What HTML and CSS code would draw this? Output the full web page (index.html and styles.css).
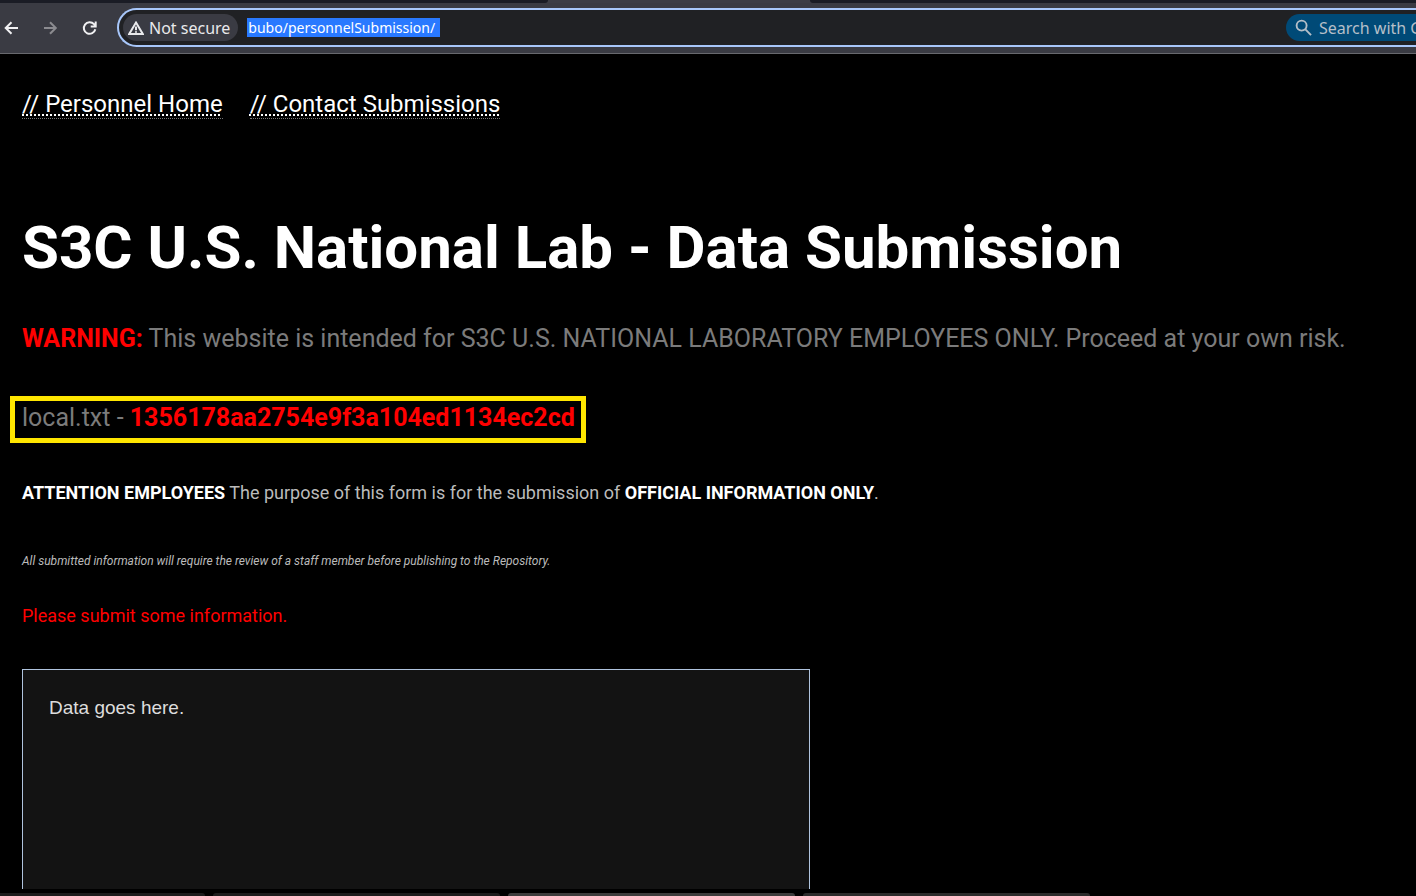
FILE: index.html
```html
<!DOCTYPE html>
<html lang="en">
<head>
<meta charset="utf-8">
<title>S3C U.S. National Lab - Data Submission</title>
<link rel="stylesheet" href="styles.css">
</head>
<body>
<div class="tabstrip"><div class="tab-left"></div><div class="tab-active"></div><div class="tab-right"></div></div>
<header class="toolbar">
  <button class="nav-btn" aria-label="Back"><svg viewBox="0 0 16 16"><path d="M15 8H3M8.500 2.200 2.700 8 8.500 13.800"/></svg></button>
  <button class="nav-btn dim" aria-label="Forward"><svg viewBox="0 0 16 16"><path d="M2 8h11.500M8 2.200 13.800 8 8 13.800"/></svg></button>
  <button class="nav-btn" aria-label="Reload"><svg viewBox="0 0 16 16"><path d="M14.300 9.300A5.800 5.800 0 1 1 13 4.200L14.500 5.800M14.700 1.500v5H9.700"/></svg></button>
  <div class="omnibox">
    <button class="chip"><svg viewBox="0 0 16 14"><path d="M8 1.600 14.800 13H1.200Z"/><path d="M8 5.600v3.600M8 10.300v1.500"/></svg>Not secure</button>
    <div class="url-wrap"><input class="url" type="text" aria-label="Address" value="bubo/personnelSubmission/"></div>
    <button class="search"><svg viewBox="0 0 18 18"><circle cx="7" cy="7" r="5.300"/><path d="m11 11 6 6"/></svg>Search with G</button>
  </div>
</header>
<main class="page">
  <nav class="links"><a href="#">// Personnel Home</a><a href="#">// Contact Submissions</a></nav>
  <h1>S3C U.S. National Lab - Data Submission</h1>
  <p class="lead"><strong>WARNING:</strong> This website is intended for S3C U.S. NATIONAL LABORATORY EMPLOYEES ONLY. Proceed at your own risk.</p>
  <p class="lead flag">local.txt - <strong>1356178aa2754e9f3a104ed1134ec2cd</strong></p>
  <p class="notice"><strong>ATTENTION EMPLOYEES</strong> The purpose of this form is for the submission of <strong>OFFICIAL INFORMATION ONLY</strong>.</p>
  <p class="review">All submitted information will require the review of a staff member before publishing to the Repository.</p>
  <label class="prompt" for="data">Please submit some information.</label>
  <textarea id="data" class="data">Data goes here.</textarea>
</main>
<footer class="taskbar"><div class="task first"></div><div class="task"></div><div class="task current"></div><div class="task other"></div></footer>
</body>
</html>
```
FILE: styles.css
```css
* { box-sizing: border-box; }
body {
  margin: 0;
  height: 100vh;
  display: flex;
  flex-direction: column;
  overflow: hidden;
  background: #000;
  font-family: Roboto, "Liberation Sans", sans-serif;
}
button { border: 0; padding: 0; background: none; color: inherit; font: inherit; }
svg { fill: none; stroke: currentColor; }

.tabstrip { display: flex; flex: none; height: 3px; background: #3c3d45; }
.tab-left { flex: 0 0 548px; background: #1a1c25; border-bottom-right-radius: 6px; }
.tab-active { flex: 0 0 262px; }
.tab-right { flex: 1; background: #1a1c25; border-bottom-left-radius: 6px; }

.toolbar {
  flex: none;
  display: flex;
  align-items: center;
  padding: 5px 0 6px 3px;
  background: #3a3b43;
  border-bottom: 1px solid #68696e;
  color: #f1f1f3;
  font: 16px/24px "Noto Sans", sans-serif;
}
.nav-btn { width: 16px; height: 16px; margin-right: 23px; }
.nav-btn svg { display: block; width: 16px; height: 16px; stroke-width: 2; }
.dim { color: #8b8b90; }
.omnibox {
  flex: 1;
  min-width: 0;
  height: 39px;
  margin-left: -3px;
  display: flex;
  align-items: center;
  overflow: hidden;
  padding-left: 4px;
  border: 2px solid #a8c7fa;
  border-right: 0;
  border-radius: 20px 0 0 20px;
  background: #202124;
}
.chip {
  flex: none;
  display: flex;
  align-items: center;
  gap: 5px;
  height: 27px;
  padding: 0 8px 0 5px;
  border-radius: 14px;
  background: #3a3b43;
  color: #e9e9eb;
}
.chip svg { width: 16px; height: 14px; stroke-width: 2; }
.url-wrap { flex: 1; display: flex; margin-left: 9px; }
.url {
  width: 193px;
  height: 19px;
  padding: 0 1px;
  border: 0;
  background: #2979ff;
  color: #fff;
  font: 14px/19px "Noto Sans", sans-serif;
}
.search {
  flex: 0 0 130px;
  height: 27px;
  display: flex;
  align-items: center;
  gap: 7px;
  padding-left: 9px;
  border-radius: 14px 0 0 14px;
  background: #004a77;
  color: #b5bfc8;
  white-space: nowrap;
  overflow: hidden;
}
.search svg { flex: none; width: 17px; height: 17px; stroke-width: 2; }

.page {
  flex: 1;
  min-height: 0;
  overflow: hidden;
  display: flex;
  flex-direction: column;
  align-items: flex-start;
  padding: 36px 22px 0;
}
.links { display: flex; gap: 27px; font-size: 24px; line-height: 28px; }
.links a {
  color: #fff;
  text-decoration: underline dotted 2px;
  text-decoration-skip-ink: none;
  text-underline-offset: 2px;
  border-bottom: 1px dotted #777;
}
h1 { margin: 93px 0 0; font-size: 60px; line-height: 72px; color: #fff; }
.lead { margin: 40px 0 0; font-size: 25px; line-height: 30px; color: #7b7b7b; }
.lead strong { color: #f00; }
.flag {
  margin: 42px 0 0 -12px;
  padding: 2px 6px 5px 7px;
  border: 5px solid #ffe600;
}
.notice { margin: 39px 0 0; font-size: 18px; line-height: 22px; color: #bbb; }
.notice strong { color: #fff; }
.review { margin: 50px 0 0; font-size: 12px; line-height: 14px; font-style: italic; color: #bbb; }
.prompt { margin-top: 37px; font-size: 18px; line-height: 22px; color: #f00; }
.data {
  flex: 0 0 300px;
  width: 788px;
  max-width: 100%;
  margin-top: 42px;
  padding: 27px 26px;
  border: 1px solid #b0c4de;
  background: #131313;
  color: #ddd;
  font: 19px/22px "Liberation Sans", Arial, sans-serif;
  resize: none;
}

.taskbar { flex: none; display: flex; gap: 8px; height: 7px; padding-top: 4px; overflow: hidden; }
.task { width: 287px; background: #1c1c1c; border-radius: 4px 4px 0 0; }
.first { width: 205px; border-top-left-radius: 0; }
.current { background: #3c3c3c; }
.other { background: #2b2b2b; }
```
